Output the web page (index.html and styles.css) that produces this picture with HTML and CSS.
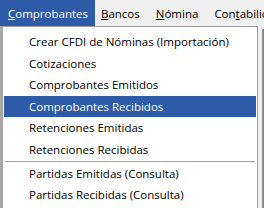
FILE: index.html
```html
<!DOCTYPE html>
<html>
<head>
<meta charset="utf-8">
<link rel="stylesheet" href="styles.css">
</head>
<body>
<div class="menubar">
  <div class="top active"><u>C</u>omprobantes</div>
  <div class="top"><u>B</u>ancos</div>
  <div class="top"><u>N</u>ómina</div>
  <div class="top">Con<u>t</u>abilidad</div>
</div>
<div class="area">
  <div class="strip-right"></div>
  <div class="dropdown">
    <div class="item">Crear CFDI de Nóminas (Importación)</div>
    <div class="item">Cotizaciones</div>
    <div class="item">Comprobantes Emitidos</div>
    <div class="item sel">Comprobantes Recibidos</div>
    <div class="item">Retenciones Emitidas</div>
    <div class="item">Retenciones Recibidas</div>
    <div class="sep"></div>
    <div class="item">Partidas Emitidas (Consulta)</div>
    <div class="item">Partidas Recibidas (Consulta)</div>
  </div>
</div>
</body>
</html>
```
FILE: styles.css
```css
html, body {
  margin: 0;
  padding: 0;
  width: 264px;
  height: 208px;
  overflow: hidden;
  background: #f0f0f0;
  font-family: "Open Sans", "Noto Sans", sans-serif;
  font-size: 11.5px;
  color: #000;
}
.menubar {
  height: 26px;
  display: flex;
  align-items: stretch;
  white-space: nowrap;
  overflow: hidden;
}
.top {
  display: flex;
  align-items: center;
  padding: 0 8px;
  flex-shrink: 0;
}
.top:first-child { padding: 0 7px 0 8px; }
.top:nth-child(2) { padding-left: 6px; }
.top.active {
  background: #2d5ba8;
  color: #fff;
}
.area {
  position: relative;
  height: 182px;
  background: #a8a8a8;
}
.strip-right {
  position: absolute;
  right: 0;
  top: 0;
  width: 6px;
  height: 100%;
  background: #f0f0f0;
}
.strip-right::after {
  content: "";
  position: absolute;
  right: 0;
  top: 3px;
  width: 2px;
  bottom: 0;
  background: #8c8c8c;
}
.dropdown {
  position: absolute;
  left: 2px;
  top: 0;
  width: 256px;
  height: 190px;
  background: #fff;
  border: 1px solid #a0a0a0;
  box-sizing: border-box;
  padding: 4px 0 0 0;
}
.item {
  height: 21.6px;
  line-height: 21.6px;
  padding-left: 25px;
  margin: 0 1px;
  white-space: nowrap;
}
.item.sel {
  background: #2d5ba8;
  color: #fff;
}
.sep {
  height: 1px;
  background: #a0a0a0;
  margin: 0 2px 1px 2px;
}
```
